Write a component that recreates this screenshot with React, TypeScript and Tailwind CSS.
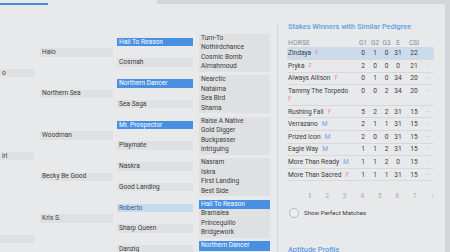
import React from "react";

type Cell = { name: string; tone?: "blue" | "pale" };

// pedigree columns, generation by generation
const gen1: Cell[] = [{ name: "o" }, { name: "irl" }, { name: "" }];

const gen2: Cell[] = [
  { name: "Halo" },
  { name: "Northern Sea" },
  { name: "Woodman" },
  { name: "Becky Be Good" },
  { name: "Kris S." },
];

const gen3: Cell[] = [
  { name: "Hail To Reason", tone: "blue" },
  { name: "Cosmah" },
  { name: "Northern Dancer", tone: "blue" },
  { name: "Sea Saga" },
  { name: "Mr. Prospector", tone: "blue" },
  { name: "Playmate" },
  { name: "Naskra" },
  { name: "Good Landing" },
  { name: "Roberto", tone: "pale" },
  { name: "Sharp Queen" },
  { name: "Danzig" },
];

const gen4: Cell[][] = [
  [{ name: "Turn-To" }, { name: "Nothirdchance" }, { name: "Cosmic Bomb" }, { name: "Almahmoud" }],
  [{ name: "Nearctic" }, { name: "Natalma" }, { name: "Sea Bird" }, { name: "Shama" }],
  [{ name: "Raise A Native" }, { name: "Gold Digger" }, { name: "Buckpasser" }, { name: "Intriguing" }],
  [{ name: "Nasram" }, { name: "Iskra" }, { name: "First Landing" }, { name: "Best Side" }],
  [{ name: "Hail To Reason", tone: "blue" }, { name: "Bramalea" }, { name: "Princequillo" }, { name: "Bridgework" }],
  [{ name: "Northern Dancer", tone: "blue" }],
];

const winners = [
  { id: 1, name: "Zindaya", sex: "F", g1: 0, g2: 1, g3: 0, e: 31, csi: 22, active: true },
  { id: 2, name: "Pryka", sex: "F", g1: 2, g2: 0, g3: 0, e: 0, csi: 21 },
  { id: 3, name: "Always Allison", sex: "F", g1: 0, g2: 1, g3: 0, e: 34, csi: 20 },
  { id: 4, name: "Tammy The Torpedo", sex: "F", g1: 0, g2: 0, g3: 2, e: 34, csi: 20, wrap: true },
  { id: 5, name: "Rushing Fall", sex: "F", g1: 5, g2: 2, g3: 2, e: 31, csi: 15 },
  { id: 6, name: "Verrazano", sex: "M", g1: 2, g2: 1, g3: 1, e: 31, csi: 15 },
  { id: 7, name: "Prized Icon", sex: "M", g1: 2, g2: 0, g3: 0, e: 31, csi: 15 },
  { id: 8, name: "Eagle Way", sex: "M", g1: 1, g2: 1, g3: 2, e: 31, csi: 15 },
  { id: 9, name: "More Than Ready", sex: "M", g1: 1, g2: 1, g3: 2, e: 0, csi: 15 },
  { id: 10, name: "More Than Sacred", sex: "F", g1: 1, g2: 1, g3: 1, e: 31, csi: 15 },
];

const pages = ["1", "2", "3", "4", "5", "6", "7", "›"];

const toneClass = (tone?: string) =>
  tone === "blue"
    ? "bg-[#4a90e2] text-white"
    : tone === "pale"
    ? "bg-[#c7dbf0] text-[#34557d]"
    : "bg-[#dfe0e2] text-[#3a3a3a]";

const NameBar = ({ cell, h }: { cell: Cell; h: string }) => (
  <div className={`${h} flex items-center`}>
    <div className={`w-full h-[8.5px] flex items-center pl-[2px] leading-none whitespace-nowrap overflow-hidden ${toneClass(cell.tone)}`}>
      {cell.name}
    </div>
  </div>
);

const Pedigree = () => (
  <div className="w-[277px] shrink-0 flex pt-[26.5px] text-[6.6px]">
    {/* first generation, cut at the window edge */}
    <div className="w-[34px] flex flex-col">
      {gen1.map((c, i) => (
        <NameBar key={i} cell={c} h="h-[83px]" />
      ))}
    </div>
    <div className="w-[73px] ml-[6px] flex flex-col">
      {gen2.map((c) => (
        <NameBar key={c.name} cell={c} h="h-[41.5px]" />
      ))}
    </div>
    <div className="w-[76px] ml-[4px] flex flex-col">
      {gen3.map((c, i) => (
        <NameBar key={i} cell={c} h="h-[20.75px]" />
      ))}
    </div>
    <div className="w-[71px] ml-[6px] flex flex-col">
      {gen4.map((group, gi) => (
        <div key={gi} className="h-[41.5px] pt-[2px] shrink-0">
          <div className="bg-[#dfe0e2] flex flex-col">
            {group.map((c, i) => (
              <div
                key={i}
                className={`h-[9.5px] flex items-center pl-[2px] leading-none whitespace-nowrap ${
                  c.tone === "blue" ? "bg-[#4a90e2] text-white" : "text-[#3a3a3a]"
                }`}
              >
                {c.name}
              </div>
            ))}
          </div>
        </div>
      ))}
    </div>
  </div>
);

const SexTag = ({ sex }: { sex: string }) => (
  <span className={`ml-[4px] ${sex === "F" ? "text-[#ec8fab]" : "text-[#6aa6e6]"}`}>{sex}</span>
);

const StakesPanel = () => (
  <div className="flex-1 mt-[17px] border-l border-[#d6d7da] pl-[10px] flex flex-col">
    <div className="text-[7.4px] font-medium text-[#5c9fe2] leading-none mt-[1px] whitespace-nowrap">
      Stakes Winners with Similar Pedigree
    </div>

    {/* table */}
    <div className="w-[147px] ml-[-1px] mt-[8px] text-[6.6px] text-[#3a3a3a]">
      <div className="grid grid-cols-[70px_12px_12px_11px_12px_20px_10px] h-[9px] items-center text-[#8a8b8e] leading-none">
        <div className="pl-[1px] tracking-[0.2px]">HORSE</div>
        <div className="text-center">G1</div>
        <div className="text-center">G2</div>
        <div className="text-center">G3</div>
        <div className="text-center">E</div>
        <div className="text-center">CSI</div>
        <div />
      </div>
      {winners.map((w) => (
        <div
          key={w.id}
          className={`grid grid-cols-[70px_12px_12px_11px_12px_20px_10px] items-start py-[1.8px] leading-[8px] border-b border-[#d7d8db] ${
            w.active ? "bg-[#cbdbec]" : ""
          }`}
        >
          <div className="pl-[1px] whitespace-nowrap">
            {w.name}
            {w.wrap ? <br /> : null}
            {w.wrap ? <span className="text-[#ec8fab]">{w.sex}</span> : <SexTag sex={w.sex} />}
          </div>
          <div className="text-center">{w.g1}</div>
          <div className="text-center">{w.g2}</div>
          <div className="text-center">{w.g3}</div>
          <div className="text-center">{w.e}</div>
          <div className="text-center">{w.csi}</div>
          <div className="text-center text-[#c9cacd]">–</div>
        </div>
      ))}
    </div>

    {/* pagination */}
    <div className="flex mt-[12px] ml-[13px] text-[6.8px] leading-none text-[#a9aaad]">
      {pages.map((p, i) => (
        <div key={p} className={`w-[17.5px] text-center ${i === 0 ? "text-[#5c9fe2]" : ""}`}>
          {p}
        </div>
      ))}
    </div>

    <div className="flex items-center mt-[8px] ml-[1px]">
      <div className="w-[10px] h-[10px] rounded-full border border-[#b9babd] bg-[#eeeff1]" />
      <div className="ml-[5px] text-[6.2px] text-[#3a3a3a] leading-none">Show Perfect Matches</div>
    </div>

    <div className="mt-[28px] text-[7.4px] font-medium text-[#5c9fe2] leading-none whitespace-nowrap">
      Aptitude Profile
    </div>
  </div>
);

export default function App() {
  return (
    <div className="w-[450px] h-[252px] bg-[#e8e9eb] flex overflow-hidden font-['Roboto',sans-serif]">
      <div className="flex-1 flex flex-col">
        {/* top strip: active tab underline + bar */}
        <div className="h-[5px] flex shrink-0">
          <div className="w-[157px] pt-[3px]">
            <div className="w-[48px] h-[2px] bg-[#4a90e2]" />
          </div>
          <div className="flex-1 h-[4px] bg-[#d4d5d8]" />
        </div>
        <div className="flex flex-1">
          <Pedigree />
          <StakesPanel />
        </div>
      </div>
      <div className="w-[5px] bg-[#d4d5d8]" />
    </div>
  );
}
